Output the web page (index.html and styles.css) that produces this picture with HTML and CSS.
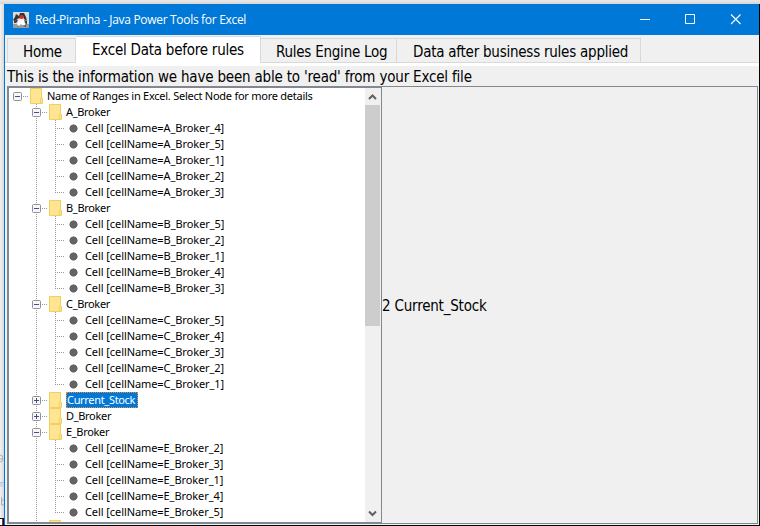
FILE: index.html
```
<!DOCTYPE html>
<html lang="en">
<head>
<meta charset="utf-8">
<title>Red-Piranha - Java Power Tools for Excel</title>
<link rel="stylesheet" href="styles.css">
</head>
<body>
<svg width="0" height="0" class="defs">
  <symbol id="folder" viewBox="0 0 14 16"><path d="M.5.5h11v10h1v5H.5z" fill="#ffe591" stroke="#efcf5f"/><path d="M10.500 10.500v5" stroke="#efcf5f"/></symbol>
  <symbol id="minus" viewBox="0 0 9 9"><rect x=".5" y=".5" width="8" height="8" rx="1" fill="#f7f7f7" stroke="#919191"/><path d="M2 4.500h5" stroke="#3c50a0"/></symbol>
  <symbol id="plus" viewBox="0 0 9 9"><rect x=".5" y=".5" width="8" height="8" rx="1" fill="#f7f7f7" stroke="#919191"/><path d="M2 4.500h5M4.500 2v5" stroke="#3c50a0"/></symbol>
</svg>
<svg class="behind" width="4" height="86" viewBox="0 0 4 86"><path d="M0 15q3 0 3 3.500T0 22M0 19h3" fill="none" stroke="#a9afb5"/><path d="M0 42.500h4" stroke="#b9c4d4"/><path d="M0 43h4v4H0z" fill="#ccd8eb"/><path d="M1.500 57v8h2.500M1.500 60h2.500" fill="none" stroke="#9db3cc"/><path d="M0 78h4v8H0z" fill="#111"/><path d="M0 79h2v6H0z" fill="#fff"/><path d="M2.500 79v6" stroke="#8b2f58"/></svg>
<div class="window">
  <header class="titlebar">
    <svg class="app" width="16" height="16" viewBox="0 0 16 16"><rect width="16" height="16" fill="#d9dcde"/><path d="M0 12h16v4H0z" fill="#9a9da0"/><path d="M3 2l3 2 1-3h4l2 4 1 4-3-2-1-3-3 2-3 1-2 2-2-1 2-3z" fill="#353535"/><path d="M1 8l3-1 1 2-2 2H1zM11 8l3 1v4l-2-2z" fill="#444"/><path d="M5 8l3-1 3 1 1 5H9l-1-1-2 2H4z" fill="#fff"/><path d="M4 13l2 1-1 1zM10 14l3-1v2z" fill="#555"/><ellipse cx="8.500" cy="5" rx="2.200" ry="2" fill="#dc2a24"/></svg>
    <span class="caption">Red-Piranha - Java Power Tools for Excel</span>
    <svg class="controls" width="102" height="12" viewBox="0 0 102 12"><path d="M0 5.500h10M45.500.500h9v9h-9z" fill="none" stroke="#fff"/><path d="M91 .500l9.500 9.500M100.500.500L91 10" stroke="#fff" stroke-width="1.100"/></svg>
  </header>
  <nav class="tabs">
    <div class="tab t1"><span>Home</span></div>
    <div class="tab t2 active"><span>Excel Data before rules</span></div>
    <div class="tab t3"><span>Rules Engine Log</span></div>
    <div class="tab t4"><span>Data after business rules applied</span></div>
  </nav>
  <p class="info">This is the information we have been able to 'read' from your Excel file</p>
  <main class="split">
    <section class="treepane">
      <ul class="tree">
        <li class="node root"><svg class="tg"><use href="#minus"/></svg><svg class="fd"><use href="#folder"/></svg><span class="name rootname">Name of Ranges in Excel. Select Node for more details</span></li>
        <li class="group">
          <div class="node"><svg class="tg"><use href="#minus"/></svg><svg class="fd"><use href="#folder"/></svg><span class="name">A_Broker</span></div>
          <ul><li>Cell [cellName=A_Broker_4]</li><li>Cell [cellName=A_Broker_5]</li><li>Cell [cellName=A_Broker_1]</li><li>Cell [cellName=A_Broker_2]</li><li>Cell [cellName=A_Broker_3]</li></ul>
        </li>
        <li class="group">
          <div class="node"><svg class="tg"><use href="#minus"/></svg><svg class="fd"><use href="#folder"/></svg><span class="name">B_Broker</span></div>
          <ul><li>Cell [cellName=B_Broker_5]</li><li>Cell [cellName=B_Broker_2]</li><li>Cell [cellName=B_Broker_1]</li><li>Cell [cellName=B_Broker_4]</li><li>Cell [cellName=B_Broker_3]</li></ul>
        </li>
        <li class="group">
          <div class="node"><svg class="tg"><use href="#minus"/></svg><svg class="fd"><use href="#folder"/></svg><span class="name">C_Broker</span></div>
          <ul><li>Cell [cellName=C_Broker_5]</li><li>Cell [cellName=C_Broker_4]</li><li>Cell [cellName=C_Broker_3]</li><li>Cell [cellName=C_Broker_2]</li><li>Cell [cellName=C_Broker_1]</li></ul>
        </li>
        <li class="group"><div class="node"><svg class="tg"><use href="#plus"/></svg><svg class="fd"><use href="#folder"/></svg><span class="name selected">Current_Stock</span></div></li>
        <li class="group"><div class="node"><svg class="tg"><use href="#plus"/></svg><svg class="fd"><use href="#folder"/></svg><span class="name">D_Broker</span></div></li>
        <li class="group">
          <div class="node"><svg class="tg"><use href="#minus"/></svg><svg class="fd"><use href="#folder"/></svg><span class="name">E_Broker</span></div>
          <ul><li>Cell [cellName=E_Broker_2]</li><li>Cell [cellName=E_Broker_3]</li><li>Cell [cellName=E_Broker_1]</li><li>Cell [cellName=E_Broker_4]</li><li>Cell [cellName=E_Broker_5]</li></ul>
        </li>
        <li class="group"><div class="node"><svg class="tg"><use href="#plus"/></svg><svg class="fd"><use href="#folder"/></svg></div></li>
      </ul>
      <div class="scrollbar">
        <svg width="15" height="17" viewBox="0 0 15 17"><path d="M4 11l3.500-3.500L11 11" fill="none" stroke="#606060" stroke-width="2"/></svg>
        <div class="thumb"></div>
        <svg width="15" height="17" viewBox="0 0 15 17"><path d="M4 6.500L7.500 10 11 6.500" fill="none" stroke="#606060" stroke-width="2"/></svg>
      </div>
    </section>
    <section class="detail"><span>2 Current_Stock</span></section>
  </main>
</div>
</body>
</html>
```
FILE: styles.css
```
* { box-sizing: border-box; }
body { margin: 0; width: 760px; height: 526px; overflow: hidden; background: linear-gradient(#e9e9e9, #d6d6d6) 0 0 / 100% 4px no-repeat, linear-gradient(90deg, #f2f2f2, #d9d9d9) 0 0 / 4px 100% no-repeat, #000; padding: 4px 1px 1px 4px; font-family: "DejaVu Sans Condensed", "Noto Sans", sans-serif; color: #000; }
.defs { position: absolute; }
.behind { position: absolute; left: 0; bottom: 0; }
ul { list-style: none; margin: 0; padding: 0; }
.window { width: 755px; height: 521px; background: #f0f0f0; border-left: 1px solid #0078d7; display: flex; flex-direction: column; overflow: hidden; }
.titlebar { height: 31px; flex: none; background: #0078d7; display: flex; align-items: center; padding: 0 17px 0 8px; color: #fff; }
.app { margin-right: 6px; }
.caption { flex: 1; font: 12px/31px "Open Sans", sans-serif; letter-spacing: -.31px; white-space: nowrap; }
.tabs { height: 31px; flex: none; display: flex; align-items: flex-end; padding: 1px 0 0 2px; border-bottom: 3px solid #fff; background: linear-gradient(#d9d9d9, #d9d9d9) 0 100% / 100% 1px no-repeat; }
.tab { height: 25px; border: 1px solid #d9d9d9; border-left: 0; font-size: 15px; line-height: 27px; letter-spacing: -.24px; padding-left: 15px; white-space: nowrap; }
.t1 { width: 69px; border-left: 1px solid #d9d9d9; }
.t2 { width: 185px; }
.t3 { width: 136px; }
.t4 { width: 244px; padding-left: 16px; }
.active { height: 27px; background: #fff; border-bottom: 0; padding-left: 16px; }
.info { margin: 0 0 0 2px; height: 20px; flex: none; font-size: 15px; line-height: 23px; letter-spacing: -.19px; white-space: nowrap; }
.split { flex: 1; display: flex; margin: 0 1px 1px 2px; }
.treepane { width: 375px; height: 438px; border: 2px solid #828790; border-right-width: 1px; background: #fff; display: flex; overflow: hidden; }
.tree { flex: 1; font-family: "Noto Sans", sans-serif; font-size: 11px; line-height: 16px; white-space: nowrap; height: 434px; overflow: hidden; }
.node { display: flex; height: 16px; align-items: center; letter-spacing: -.32px; }
.tg { width: 9px; height: 9px; margin-right: 8px; flex: none; }
.fd { width: 14px; height: 16px; flex: none; }
.root { padding-left: 4px; letter-spacing: -.25px; background: repeating-linear-gradient(90deg, #999 0 1px, transparent 1px 2px) 14px 8px / 5px 1px no-repeat; }
.name { padding: 0 2px; margin-left: 1px; }
.selected { margin-left: 3px; padding: 0 3px 0 1px; background: #0078d7; color: #fff; outline: 1px dotted #ff8728; outline-offset: -1px; }
.group { padding-left: 23px; background: repeating-linear-gradient(#999 0 1px, transparent 1px 2px) 27px 0 / 1px 100% no-repeat, repeating-linear-gradient(90deg, #999 0 1px, transparent 1px 2px) 33px 8px / 5px 1px no-repeat; }
.group ul { background: repeating-linear-gradient(#999 0 1px, transparent 1px 2px) 23px 0 / 1px 72px no-repeat; }
.group ul li { height: 16px; padding-left: 53px; letter-spacing: -.08px; background: radial-gradient(circle at 41.500px 8.500px, #646464 3.800px, transparent 4.300px), repeating-linear-gradient(90deg, #999 0 1px, transparent 1px 2px) 23px 8px / 9px 1px no-repeat; }
.scrollbar { width: 16px; background: #f0f0f0; display: flex; flex-direction: column; }
.scrollbar svg { flex: none; }
.scrollbar svg:last-child { margin-top: auto; }
.thumb { width: 15px; height: 221px; background: #cdcdcd; }
.detail { flex: 1; height: 438px; border: solid #828790; border-width: 1px 1px 1px 0; padding-top: 2px; display: flex; align-items: center; font-size: 15px; letter-spacing: -.2px; }
```
